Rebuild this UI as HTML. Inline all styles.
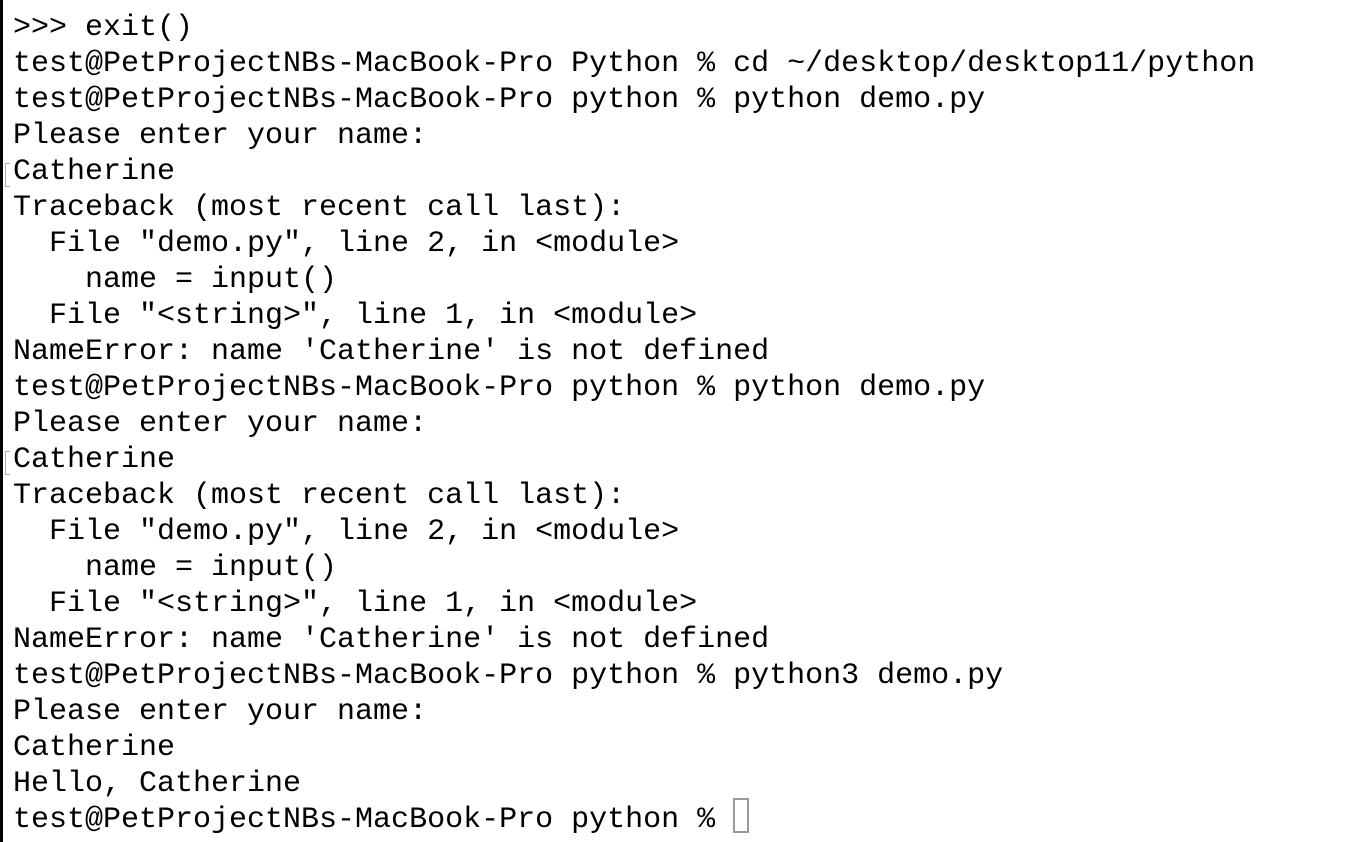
<!DOCTYPE html>
<html><head><meta charset="utf-8"><style>
html,body{margin:0;padding:0;background:#fff;width:1360px;height:842px;overflow:hidden;position:relative}
.l{position:absolute;left:0;top:0;width:3px;height:842px;background:#000}
pre{position:absolute;left:13px;top:10px;margin:0;font-family:"Liberation Mono",monospace;font-size:30px;line-height:36px;color:#000;letter-spacing:0}
.br{position:absolute;left:5px;width:5px;height:24px;border:1.5px solid #aaa;border-right:none;box-sizing:border-box}
.cur{position:absolute;left:733px;top:798px;width:16px;height:35px;border:2px solid #999;box-sizing:border-box}
</style></head><body>
<div class="l"></div>
<pre>&gt;&gt;&gt; exit()
test@PetProjectNBs-MacBook-Pro Python % cd ~/desktop/desktop11/python
test@PetProjectNBs-MacBook-Pro python % python demo.py
Please enter your name:
Catherine
Traceback (most recent call last):
  File "demo.py", line 2, in &lt;module&gt;
    name = input()
  File "&lt;string&gt;", line 1, in &lt;module&gt;
NameError: name 'Catherine' is not defined
test@PetProjectNBs-MacBook-Pro python % python demo.py
Please enter your name:
Catherine
Traceback (most recent call last):
  File "demo.py", line 2, in &lt;module&gt;
    name = input()
  File "&lt;string&gt;", line 1, in &lt;module&gt;
NameError: name 'Catherine' is not defined
test@PetProjectNBs-MacBook-Pro python % python3 demo.py
Please enter your name:
Catherine
Hello, Catherine
test@PetProjectNBs-MacBook-Pro python % </pre>
<div class="br" style="top:163px"></div>
<div class="br" style="top:451px"></div>
<div class="cur"></div>
</body></html>
